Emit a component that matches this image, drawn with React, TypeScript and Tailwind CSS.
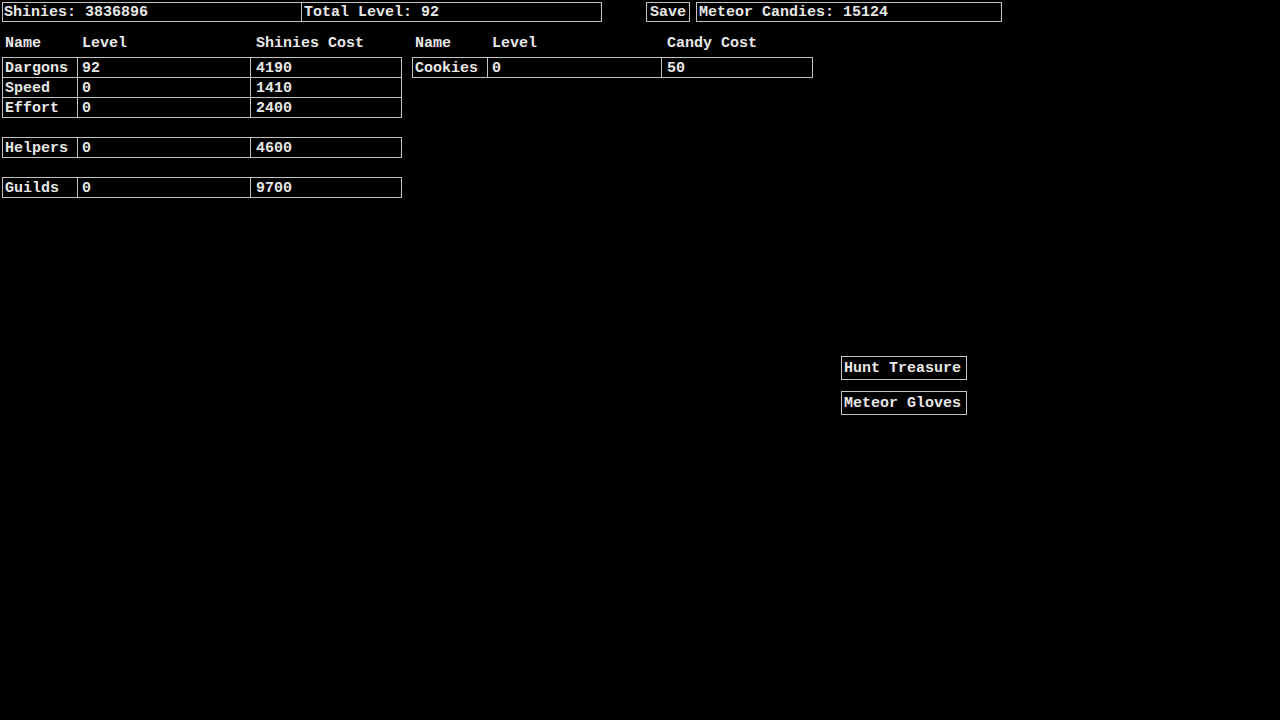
const mono = { fontFamily: '"Liberation Mono", "DejaVu Sans Mono", monospace' };

const shinyRows = [
  { name: "Dargons", level: "92", cost: "4190" },
  { name: "Speed", level: "0", cost: "1410" },
  { name: "Effort", level: "0", cost: "2400" },
];

const pads = ["pl-[2px]", "pl-[4px]", "pl-[5px]"];

function Row({ cols, cells }: { cols: string; cells: string[] }) {
  return (
    <div className={`grid ${cols}`}>
      {cells.map((c, i) => (
        <div key={i} className={`h-[20px] border-r border-b border-[#c4c4c4] ${pads[i]} pt-[1px] leading-[19px] whitespace-pre overflow-hidden`}>
          {c}
        </div>
      ))}
    </div>
  );
}

function Header({ cols, cells }: { cols: string; cells: string[] }) {
  return (
    <div className={`grid ${cols} pl-[1px] h-[18px] pt-[2px] leading-[18px]`}>
      {cells.map((c, i) => (
        <div key={i} className={`${pads[i]} whitespace-pre`}>
          {c}
        </div>
      ))}
    </div>
  );
}

export default function App() {
  const leftCols = "grid-cols-[75px_173px_151px]";
  const rightCols = "grid-cols-[75px_174px_151px]";

  return (
    <div className="min-h-screen bg-black text-[#e8e8e8] text-[15px] font-bold" style={mono}>
      {/* top bar */}
      <div className="flex items-start pt-[2px] pl-[2px]">
        <div className="flex border border-[#c4c4c4]">
          <div className="w-[299px] h-[18px] border-r border-[#c4c4c4] pl-[1px] pt-[1px] leading-[18px] overflow-hidden">Shinies: 3836896</div>
          <div className="w-[299px] h-[18px] pl-[2px] pt-[1px] leading-[18px] overflow-hidden">Total Level: 92</div>
        </div>
        <button className="ml-[44px] w-[44px] h-[20px] border border-[#c4c4c4] pt-[1px] leading-[18px] text-center overflow-hidden">Save</button>
        <div className="ml-[6px] w-[306px] h-[20px] border border-[#c4c4c4] pl-[2px] pt-[1px] leading-[18px] overflow-hidden">Meteor Candies: 15124</div>
      </div>

      {/* upgrade tables */}
      <div className="flex items-start pl-[2px] mt-[11px]">
        <div>
          <Header cols={leftCols} cells={["Name", "Level", "Shinies Cost"]} />
          <div className="mt-[6px] border-l border-t border-[#c4c4c4]">
            {shinyRows.map((r) => (
              <Row key={r.name} cols={leftCols} cells={[r.name, r.level, r.cost]} />
            ))}
          </div>
          <div className="mt-[19px] border-l border-t border-[#c4c4c4]">
            <Row cols={leftCols} cells={["Helpers", "0", "4600"]} />
          </div>
          <div className="mt-[19px] border-l border-t border-[#c4c4c4]">
            <Row cols={leftCols} cells={["Guilds", "0", "9700"]} />
          </div>
        </div>
        <div className="ml-[10px]">
          <Header cols={rightCols} cells={["Name", "Level", "Candy Cost"]} />
          <div className="mt-[6px] border-l border-t border-[#c4c4c4]">
            <Row cols={rightCols} cells={["Cookies", "0", "50"]} />
          </div>
        </div>
      </div>

      {/* actions */}
      <div className="flex flex-col items-start gap-[11px] pl-[841px] mt-[158px]">
        <button className="w-[126px] h-[24px] border border-[#c4c4c4] pl-[2px] pt-[1px] text-left leading-[22px]">Hunt Treasure</button>
        <button className="w-[126px] h-[24px] border border-[#c4c4c4] pl-[2px] pt-[1px] text-left leading-[22px]">Meteor Gloves</button>
      </div>
    </div>
  );
}
